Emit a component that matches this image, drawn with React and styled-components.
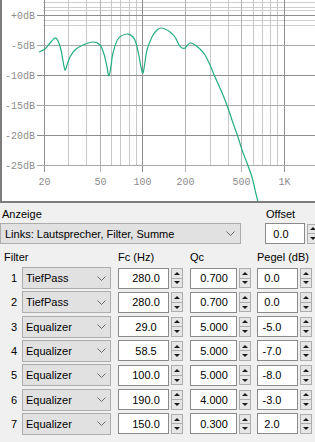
import React from 'react';
import styled, { createGlobalStyle } from 'styled-components';

const Global = createGlobalStyle`
  html, body { margin: 0; padding: 0; background: #f0f0f0; overflow: hidden; }
  body { font-family: "Liberation Sans", Arial, sans-serif; font-size: 11px; color: #000; }
`;

const Page = styled.div`
  width: 315px;
  height: 442px;
  overflow: hidden;
  background: #f0f0f0;
`;

const ChartBox = styled.div`
  width: 315px;
  height: 203px;
  box-sizing: border-box;
  background: #fff;
  border-left: 2px solid #7d7d7d;
  border-bottom: 2px solid #7d7d7d;
  overflow: hidden;
`;

const Controls = styled.div`
  padding-top: 4px;
  display: flex;
  flex-direction: column;
`;

const TopRow = styled.div`
  display: flex;
  gap: 24px;
`;

const Field = styled.div`
  display: flex;
  flex-direction: column;
  gap: 2px;
  width: ${(p) => p.$w}px;
  flex-shrink: 0;
`;

const Label = styled.div`
  height: 14px;
  line-height: 14px;
  padding-left: ${(p) => p.$pl || 0}px;
  white-space: nowrap;
`;

const Combo = styled.div`
  height: ${(p) => p.$h}px;
  width: ${(p) => p.$w}px;
  box-sizing: border-box;
  border: 1px solid #adadad;
  background: #e1e1e1;
  display: flex;
  align-items: center;
  justify-content: space-between;
  padding: 0 ${(p) => p.$pr}px 0 ${(p) => p.$pl}px;
  white-space: nowrap;
`;

const Spin = styled.div`
  display: flex;
  align-items: center;
  gap: 2px;
`;

const NumBox = styled.div`
  width: ${(p) => p.$w}px;
  height: 21px;
  box-sizing: border-box;
  border: 1px solid #8a8a8a;
  background: #fff;
  display: flex;
  align-items: center;
  justify-content: center;
  padding: 0 ${(p) => p.$pr || 0}px 0 ${(p) => p.$pl || 0}px;
  white-space: nowrap;
`;

const Stepper = styled.div`
  width: 12px;
  height: 20px;
  flex-shrink: 0;
  display: flex;
  flex-direction: column;
  gap: 0;
`;

const StepBtn = styled.div`
  flex: 1;
  box-sizing: border-box;
  border: 1px solid #adadad;
  background: #e6e6e6;
  display: flex;
  align-items: center;
  justify-content: center;
  & + & { border-top: none; }
`;

const Tri = styled.div`
  width: 0;
  height: 0;
  border-left: 3px solid transparent;
  border-right: 3px solid transparent;
  ${(p) => (p.$up ? 'border-bottom: 3px solid #1a1a1a;' : 'border-top: 3px solid #1a1a1a;')}
`;

const Header = styled.div`
  display: grid;
  grid-template-columns: 22px 96px 72px 67px 58px;
  height: 14px;
  line-height: 14px;
  margin-top: 6px;
`;

const HeadCell = styled.div`
  grid-column: ${(p) => p.$span || 'auto'};
  padding-left: ${(p) => p.$pl || 0}px;
  white-space: nowrap;
`;

const Rows = styled.div`
  margin-top: 3px;
  display: flex;
  flex-direction: column;
  gap: 2.33px;
`;

const Row = styled.div`
  display: grid;
  grid-template-columns: 22px 96px 72px 67px 58px;
  height: 22px;
  align-items: center;
`;

const Num = styled.div`
  text-align: right;
  padding-right: 5px;
`;

const Chevron = () => (
  <svg width="9" height="5" viewBox="0 0 9 5">
    <polyline points="0.5,0.5 4.5,4.5 8.5,0.5" fill="none" stroke="#6a6a6a" strokeWidth="1" />
  </svg>
);

const Stepper2 = () => (
  <Stepper>
    <StepBtn><Tri $up /></StepBtn>
    <StepBtn><Tri /></StepBtn>
  </Stepper>
);

const fx = (f) => 43.5 + 141.5 * Math.log10(f / 20);

function smoothPath(pts) {
  let d = `M${pts[0][0]},${pts[0][1]}`;
  for (let i = 0; i < pts.length - 1; i++) {
    const p0 = pts[i - 1] || pts[i];
    const p1 = pts[i];
    const p2 = pts[i + 1];
    const p3 = pts[i + 2] || p2;
    const c1x = p1[0] + (p2[0] - p0[0]) / 6;
    const c1y = p1[1] + (p2[1] - p0[1]) / 6;
    const c2x = p2[0] - (p3[0] - p1[0]) / 6;
    const c2y = p2[1] - (p3[1] - p1[1]) / 6;
    d += ` C${c1x.toFixed(2)},${c1y.toFixed(2)} ${c2x.toFixed(2)},${c2y.toFixed(2)} ${p2[0]},${p2[1]}`;
  }
  return d;
}

const curve = [
  [39, 52], [45, 49], [50, 43], [55, 38], [58, 41], [61, 50], [63, 61], [65, 70], [67, 65], [70, 57],
  [75, 50], [83, 45], [93, 42], [100, 45], [104, 54], [107, 67], [109, 76], [111, 66], [113, 53],
  [118, 39], [127, 34], [133, 37], [136, 43], [139, 56], [141, 67], [143, 73], [145, 62], [147, 50],
  [152, 37], [157, 30], [161, 28], [165, 29], [170, 32], [175, 37], [179, 45], [182, 48], [185, 48],
  [190, 43], [195, 45], [200, 49], [205, 55], [210, 65], [215, 77], [220, 88], [225, 100], [229, 111],
  [233, 123], [238, 137], [242, 150], [247, 163], [252, 177], [256, 194], [259, 206],
];

const dbLines = [
  { y: 15, label: '+0dB', dark: true },
  { y: 45, label: '-5dB' },
  { y: 75, label: '-10dB', dark: true },
  { y: 105, label: '-15dB' },
  { y: 135, label: '-20dB', dark: true },
  { y: 165, label: '-25dB' },
];
const lightH = [2, 7, 10, 20, 25];

const vFreqs = [20, 30, 40, 50, 60, 70, 80, 90, 100, 200, 300, 400, 500, 600, 700, 800, 900, 1000];
const labelled = { 20: '20', 50: '50', 100: '100', 200: '200', 500: '500', 1000: '1K' };
const darkV = { 20: 1, 100: 1, 1000: 1 };

const Chart = () => (
  <ChartBox>
    <svg width="313" height="201" viewBox="2 0 313 201" style={{ display: 'block' }}>
      {lightH.map((y) => (
        <line key={'lh' + y} x1={43} x2={315} y1={y + 0.5} y2={y + 0.5} stroke="#cfcfcf" strokeWidth="1" />
      ))}
      {vFreqs.map((f) => {
        const x = Math.round(fx(f)) + 0.5;
        const lab = labelled[f];
        return (
          <g key={'v' + f}>
            <line x1={x} x2={x} y1={0} y2={lab ? 172 : 165} stroke={darkV[f] ? '#8e8e8e' : lab ? '#b4b4b4' : '#c8c8c8'} strokeWidth="1" />
            {lab && (
              <text x={x} y={185} textAnchor="middle" fontFamily='"Liberation Mono", monospace' fontSize="10" fill="#8c8c8c">
                {lab}
              </text>
            )}
          </g>
        );
      })}
      {dbLines.map((l) => (
        <g key={l.label}>
          <line x1={37} x2={315} y1={l.y + 0.5} y2={l.y + 0.5} stroke={l.dark ? '#8e8e8e' : '#a8a8a8'} strokeWidth="1" />
          <text x={35} y={l.y + 4} textAnchor="end" fontFamily='"Liberation Mono", monospace' fontSize="10" fill="#8c8c8c">
            {l.label}
          </text>
        </g>
      ))}
      <path d={smoothPath(curve)} fill="none" stroke="#22ad82" strokeWidth="1.2" />
    </svg>
  </ChartBox>
);

const filters = [
  { type: 'TiefPass', fc: '280.0', qc: '0.700', pg: '0.0' },
  { type: 'TiefPass', fc: '280.0', qc: '0.700', pg: '0.0' },
  { type: 'Equalizer', fc: '29.0', qc: '5.000', pg: '-5.0' },
  { type: 'Equalizer', fc: '58.5', qc: '5.000', pg: '-7.0' },
  { type: 'Equalizer', fc: '100.0', qc: '5.000', pg: '-8.0' },
  { type: 'Equalizer', fc: '190.0', qc: '4.000', pg: '-3.0' },
  { type: 'Equalizer', fc: '150.0', qc: '0.300', pg: '2.0' },
];

export default function App() {
  return (
    <Page>
      <Global />
      <Chart />
      <Controls>
        <TopRow>
          <Field $w={241}>
            <Label $pl={2}>Anzeige</Label>
            <Combo $w={241} $h={21} $pl={4} $pr={5}>
              <span>Links: Lautsprecher, Filter, Summe</span>
              <Chevron />
            </Combo>
          </Field>
          <Field $w={60}>
            <Label $pl={1}>Offset</Label>
            <Spin>
              <NumBox $w={40} $pr={8}>0.0</NumBox>
              <Stepper2 />
            </Spin>
          </Field>
        </TopRow>
        <Header>
          <HeadCell $span="1 / 3" $pl={4}>Filter</HeadCell>
          <HeadCell>Fc (Hz)</HeadCell>
          <HeadCell>Qc</HeadCell>
          <HeadCell>Pegel (dB)</HeadCell>
        </Header>
        <Rows>
          {filters.map((f, i) => (
            <Row key={i}>
              <Num>{i + 1}</Num>
              <Combo $w={89} $h={22} $pl={3} $pr={4}>
                <span>{f.type}</span>
                <Chevron />
              </Combo>
              <Spin>
                <NumBox $w={51} $pl={5}>{f.fc}</NumBox>
                <Stepper2 />
              </Spin>
              <Spin>
                <NumBox $w={47} $pl={1}>{f.qc}</NumBox>
                <Stepper2 />
              </Spin>
              <Spin>
                <NumBox $w={41} $pr={11}>{f.pg}</NumBox>
                <Stepper2 />
              </Spin>
            </Row>
          ))}
        </Rows>
      </Controls>
    </Page>
  );
}
